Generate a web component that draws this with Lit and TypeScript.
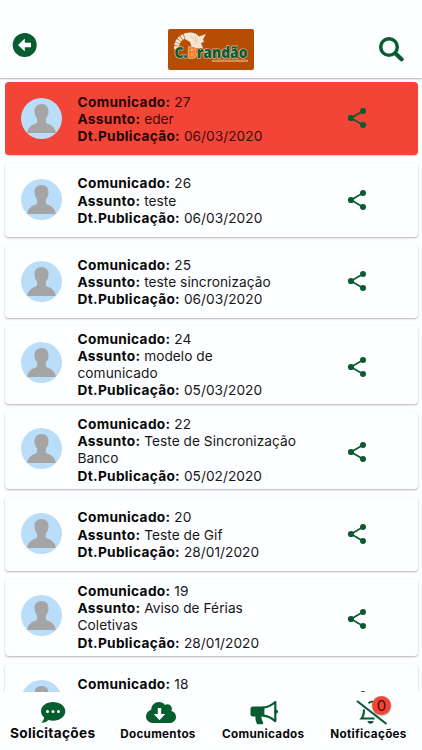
import { LitElement, html, svg, css } from "lit";
import { customElement, property } from "lit/decorators.js";
import { classMap } from "lit/directives/class-map.js";

interface Notice {
  id: number;
  subject?: string;
  date?: string;
  unread?: boolean;
  tall?: boolean;
}

const notices: Notice[] = [
  { id: 27, subject: "eder", date: "06/03/2020", unread: true },
  { id: 26, subject: "teste", date: "06/03/2020" },
  { id: 25, subject: "teste sincronização", date: "06/03/2020" },
  { id: 24, subject: "modelo de\ncomunicado", date: "05/03/2020", tall: true },
  { id: 22, subject: "Teste de Sincronização\nBanco", date: "05/02/2020", tall: true },
  { id: 20, subject: "Teste de Gif", date: "28/01/2020" },
  { id: 19, subject: "Aviso de Férias\nColetivas", date: "28/01/2020", tall: true },
  { id: 18 },
];

@customElement("notice-card")
export class NoticeCard extends LitElement {
  @property({ attribute: false }) notice!: Notice;

  static styles = css`
    :host { display: block; }
    .card {
      box-sizing: border-box;
      display: grid;
      grid-template-columns: 41px 244px 62px;
      min-height: 73.4px;
      padding: 0 0 4px 16px;
      border-radius: 4px;
      background: #fdfeff;
      box-shadow: 0 1px 2px rgba(30, 20, 40, 0.32);
    }
    .tall { min-height: 77.4px; }
    .unread { background: #f24537; box-shadow: 0 1px 1px rgba(120, 60, 60, 0.25); }
    .avatar { width: 41px; height: 41px; margin: 16px 0 0; display: block; }
    .text {
      margin: 12.100px 0 0 16px;
      font: 400 13.700px/17.200px Inter, sans-serif;
      letter-spacing: 0.040px;
      color: #17171a;
      white-space: pre-line;
    }
    .tall .text { margin-top: 4.300px; }
    .unread .text { color: #3b0d0a; }
    b { font-weight: 700; letter-spacing: 0.310px; color: #08080a; }
    .unread b { color: #260503; }
    .share { margin: 25.500px 0 0 41px; width: 20px; height: 22px; display: block; }
    .tall .share { margin-top: 29.500px; }
  `;

  render() {
    const n = this.notice;
    return html`<div class=${classMap({ card: true, unread: !!n.unread, tall: !!n.tall })}>
      <svg class="avatar" viewBox="0 0 41 41">
        <circle cx="20.500" cy="20.500" r="20.500" fill="#badefa" />
        <path fill="#a5a5a5" d="M20.500 6c4.800 0 7.200 3.300 7 7.600c-.1 3-1 5.200-2.600 7v3.400c0 1.200 1.400 1.700 3 2.300c3.700 1.500 6.300 4 6.900 8.700H6.200c.6-4.700 3.200-7.200 6.900-8.700c1.600-.6 3-1.100 3-2.300v-3.400c-1.600-1.800-2.500-4-2.600-7C13.300 9.300 15.700 6 20.500 6z" />
      </svg>
      <div class="text"><div><b>Comunicado:</b> ${n.id}</div>${n.subject ? html`<div><b>Assunto:</b> ${n.subject}</div>` : ""}${n.date ? html`<div><b>Dt.Publicação:</b> ${n.date}</div>` : ""}</div>
      <svg class="share" viewBox="0 0 20 22">
        <path d="M16 4L4 11L16 18" fill="none" stroke="#0c5a30" stroke-width="1.700" />
        <g fill="#0c5a30"><circle cx="16" cy="4" r="3" /><circle cx="4" cy="11" r="3.100" /><circle cx="16" cy="18" r="3" /></g>
      </svg>
    </div>`;
  }
}

@customElement("brand-logo")
export class BrandLogo extends LitElement {
  static styles = css`
    :host { display: block; width: 86px; height: 41px; }
    .logo { display: block; width: 86px; height: 41px; }
    .name { font: 800 16.300px "Open Sans", sans-serif; paint-order: stroke; stroke: #e9d6b8; stroke-width: 1.200px; stroke-linejoin: round; fill: #0c5c3c; }
    .b { fill: #f5822c; }
  `;
  render() {
    return html`<svg class="logo" viewBox="0 0 86 41">
      <rect width="86" height="41" rx="2" fill="#b54e04" />
      <path d="M8.500 20C8 11 15 5.500 23 6.500" fill="none" stroke="#f5e6d4" stroke-width="5" stroke-dasharray="2.600 .6" />
      <path d="M17 4.500C23 2.500 28 4 31 7.500L38 5L35 10.500L36 13L33 14L35 19H24L22 13L17 10z" fill="#f5e6d4" />
      <path d="M23 7l3 3m2-3l-1 5m3-2l-3 5" stroke="#d39a6c" stroke-width=".5" />
      <text class="name" x="6.500" y="29.300" textLength="73" lengthAdjust="spacingAndGlyphs">C.<tspan class="b">B</tspan>randão</text>
      <path d="M44 31.700H80" stroke="#e9a875" stroke-width="2" />
      <path d="M45 31.700H79" stroke="#b86b3a" stroke-width=".7" stroke-dasharray="1.500 .7" />
    </svg>`;
  }
}

const icons = {
  chat: svg`<path fill="#075c30" d="M16 3C9.200 3 4 7 4 12.200c0 2.500 1.200 4.700 3.200 6.300c-.3 2-1.400 3.700-2.800 5.200c3 .2 5.500-1.200 7-2.700c1.400.5 3 .7 4.600.7c6.800 0 12.300-4.200 12.300-9.500S22.800 3 16 3z"/><g fill="#fdfeff"><circle cx="10.500" cy="12.500" r="1.500"/><circle cx="16" cy="12.500" r="1.500"/><circle cx="21.500" cy="12.500" r="1.500"/></g>`,
  cloud: svg`<path fill="#075c30" d="M26.400 12c.4-1 .5-1.700.5-2.200c0-2.700-2.100-4.600-4.600-4.600c-.9 0-1.700.3-2.400.7C18.500 3.900 16.300 3 14 3C9.700 3 6.200 6.300 6.200 10.800c-3 1-5.200 3.500-5.200 6.800C1 21.200 4 24 7.700 24h16.600c3.700 0 6.700-2.700 6.700-6.100c0-2.900-1.900-5.300-4.600-5.900z"/><path fill="#fdfeff" d="M12.800 9h3.400v6h4L14.500 21.200L8.800 15h4z"/>`,
  horn: svg`<path fill="#075c30" d="M4.800 7.500H16v10h-2.500c-.1 2.300.4 3.900 1.400 5.200c.8 1.100 0 2.600-1.300 2.600H10c-.6 0-1.100-.3-1.300-.8c-1-2.200-1.500-4.400-1.200-7H4.800c-1.300 0-2.300-1-2.300-2.300V9.800c0-1.300 1-2.300 2.300-2.300z"/><path fill="none" stroke="#075c30" stroke-width="2.200" stroke-linejoin="round" d="M15.300 8.600C20 8.200 24 6 27.300 3V22.200C24 19.200 20 17 15.300 16.600z"/><circle cx="28.200" cy="12.600" r="1.900" fill="#075c30"/>`,
  bell: svg`<g fill="none" stroke="#075c30" stroke-width="2.200"><path d="M1 2L30.500 25"/><path d="M12.500 4.200c1.300-1.200 2.800-1.700 4.500-1.700"/><path d="M8 10.500c.1 4-.5 6.700-2.400 9h13"/></g><path fill="#075c30" d="M11.500 22h6c0 3.700-6 3.700-6 0z"/>`,
};

@customElement("app-root")
export class AppRoot extends LitElement {
  static styles = css`
    :host { display: flex; flex-direction: column; height: 750px; overflow: hidden; background: #fdfeff; font-family: Inter, sans-serif; }
    .header {
      box-sizing: border-box; flex: none; height: 77.500px; padding: 29px 12px 0;
      display: grid; grid-template-columns: 1fr 86px 1fr; align-items: start;
      box-shadow: 0 1px 1.500px rgba(40, 30, 50, 0.35); z-index: 1;
    }
    .back { display: block; width: 26px; height: 26px; margin-top: 3px; }
    .search { display: block; width: 26px; height: 26px; margin: 7px 6px 0 0; justify-self: end; }
    .list { flex: 1; min-height: 0; overflow: hidden; display: flex; flex-direction: column; gap: 8.100px; padding: 4.300px 4px 0 4.500px; }
    .list > * { flex: none; }
    .nav { flex: none; height: 58px; display: grid; grid-template-columns: repeat(4, 105.300px); background: #fdfeff; }
    .tab { display: flex; flex-direction: column; align-items: center; position: relative; padding-top: 7px; color: #08080a; }
    .icon { display: block; width: 32px; height: 26px; flex: none; }
    .cloud { margin-left: 7px; }
    .horn { margin-left: 1.500px; }
    .bell { margin-left: 7px; }
    .label { margin-top: 1px; font-weight: 700; font-size: 11.700px; line-height: 16px; letter-spacing: 0.300px; white-space: nowrap; }
    .active .label { font-size: 13.700px; margin-top: 0; letter-spacing: 0.300px; }
    .badge {
      position: absolute; left: 56px; top: 4px; width: 19px; height: 19px; border-radius: 50%;
      background: #f24537; color: #3b0d0a; font-size: 15px; line-height: 19px; text-align: center;
      box-shadow: 0 1px 2px rgba(0, 0, 0, 0.3);
    }
  `;

  private tab(label: string, icon: keyof typeof icons, active = false, badge?: number) {
    return html`<div class=${classMap({ tab: true, active })}>
      <svg class="icon ${icon}" viewBox="0 0 32 26">${icons[icon]}</svg>
      ${badge === undefined ? "" : html`<span class="badge">${badge}</span>`}
      <span class="label">${label}</span>
    </div>`;
  }

  render() {
    return html`
      <div class="header">
        <svg class="back" viewBox="0 0 26 26">
          <circle cx="12.700" cy="13" r="12" fill="#075c30" />
          <path fill="#fdfeff" d="M6 13l6.800-6.500v4.200H19v4.600h-6.200v4.200z" />
        </svg>
        <brand-logo></brand-logo>
        <svg class="search" viewBox="0 0 26 26" fill="none" stroke="#075c30">
          <circle cx="11" cy="11" r="8.300" stroke-width="3.500" />
          <path d="M17.500 17.500L23.500 23.300" stroke-width="4.300" stroke-linecap="round" />
        </svg>
      </div>
      <div class="list">${notices.map((n) => html`<notice-card .notice=${n}></notice-card>`)}</div>
      <div class="nav">
        ${this.tab("Solicitações", "chat", true)}
        ${this.tab("Documentos", "cloud")}
        ${this.tab("Comunicados", "horn")}
        ${this.tab("Notificações", "bell", false, 0)}
      </div>
    `;
  }
}
